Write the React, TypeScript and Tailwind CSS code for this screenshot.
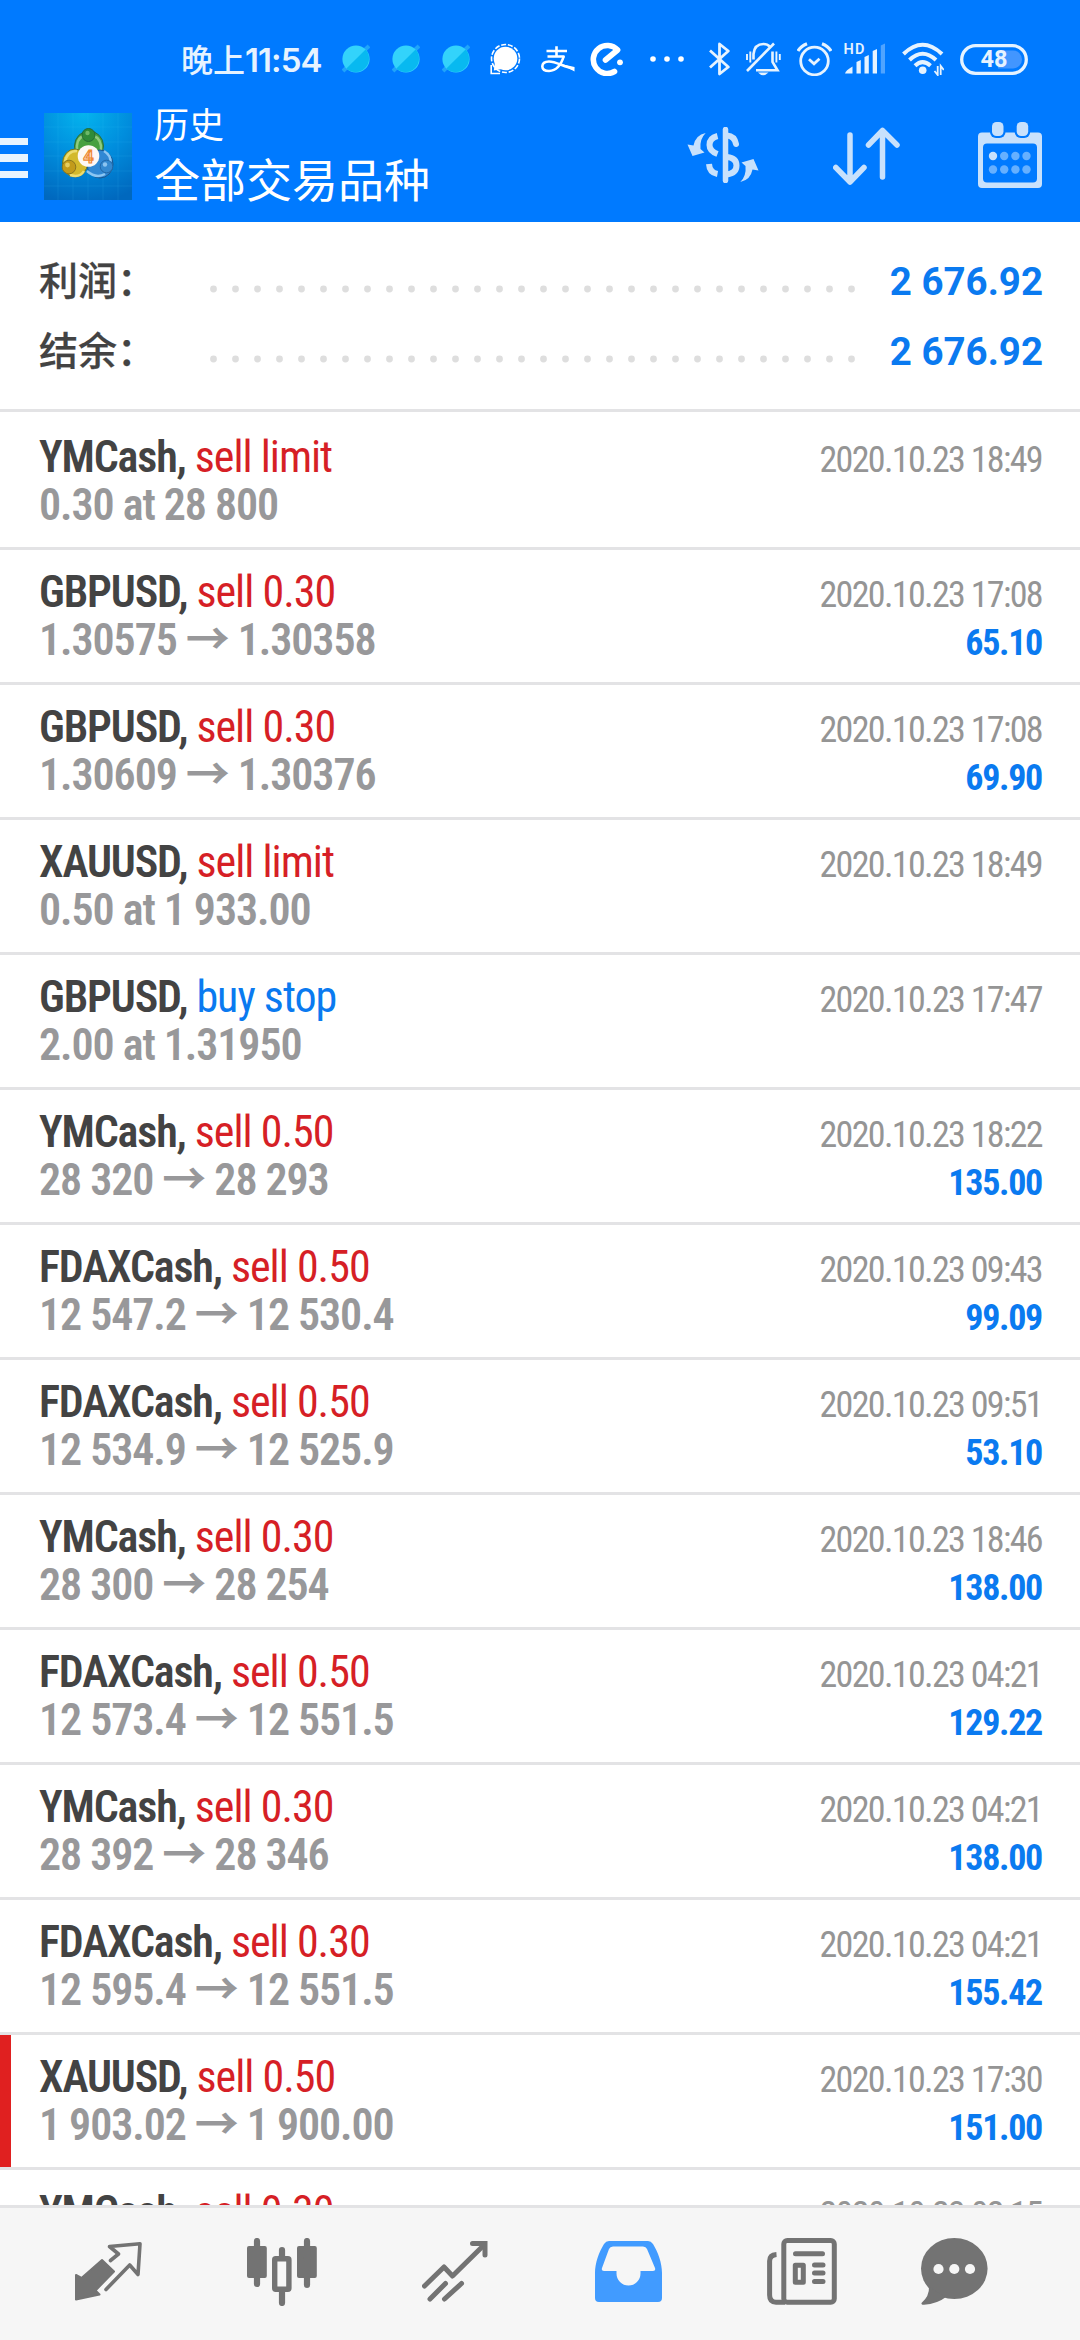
import clsx from 'clsx';

type Deal = {
  symbol: string;
  side: 'sell' | 'buy';
  label: string;
  details: string;
  time: string;
  profit?: string;
  marked?: boolean;
};

const deals: Deal[] = [
  { symbol: 'YMCash', side: 'sell', label: 'sell limit', details: '0.30 at 28 800', time: '2020.10.23 18:49' },
  { symbol: 'GBPUSD', side: 'sell', label: 'sell 0.30', details: '1.30575 → 1.30358', time: '2020.10.23 17:08', profit: '65.10' },
  { symbol: 'GBPUSD', side: 'sell', label: 'sell 0.30', details: '1.30609 → 1.30376', time: '2020.10.23 17:08', profit: '69.90' },
  { symbol: 'XAUUSD', side: 'sell', label: 'sell limit', details: '0.50 at 1 933.00', time: '2020.10.23 18:49' },
  { symbol: 'GBPUSD', side: 'buy', label: 'buy stop', details: '2.00 at 1.31950', time: '2020.10.23 17:47' },
  { symbol: 'YMCash', side: 'sell', label: 'sell 0.50', details: '28 320 → 28 293', time: '2020.10.23 18:22', profit: '135.00' },
  { symbol: 'FDAXCash', side: 'sell', label: 'sell 0.50', details: '12 547.2 → 12 530.4', time: '2020.10.23 09:43', profit: '99.09' },
  { symbol: 'FDAXCash', side: 'sell', label: 'sell 0.50', details: '12 534.9 → 12 525.9', time: '2020.10.23 09:51', profit: '53.10' },
  { symbol: 'YMCash', side: 'sell', label: 'sell 0.30', details: '28 300 → 28 254', time: '2020.10.23 18:46', profit: '138.00' },
  { symbol: 'FDAXCash', side: 'sell', label: 'sell 0.50', details: '12 573.4 → 12 551.5', time: '2020.10.23 04:21', profit: '129.22' },
  { symbol: 'YMCash', side: 'sell', label: 'sell 0.30', details: '28 392 → 28 346', time: '2020.10.23 04:21', profit: '138.00' },
  { symbol: 'FDAXCash', side: 'sell', label: 'sell 0.30', details: '12 595.4 → 12 551.5', time: '2020.10.23 04:21', profit: '155.42' },
  { symbol: 'XAUUSD', side: 'sell', label: 'sell 0.50', details: '1 903.02 → 1 900.00', time: '2020.10.23 17:30', profit: '151.00', marked: true },
  { symbol: 'YMCash', side: 'sell', label: 'sell 0.30', details: '', time: '2020.10.23 02:15' },
];

const summary = [
  { label: '利润：', value: '2 676.92' },
  { label: '结余：', value: '2 676.92' },
];

export default function App() {
  return (
    <div className="flex h-[2340px] w-[1080px] flex-col overflow-hidden bg-white font-[Roboto,'Noto_Sans_CJK_SC',sans-serif]">
      <header className="h-[222px] shrink-0 bg-[#007aff]">
        <StatusBar />
        <TitleBar />
      </header>
      <main className="min-h-0 flex-1 overflow-hidden">
        <section className="h-[190px] border-b-[3px] border-[#e3e3e5] pt-[25px]">
          {summary.map(item => (
            <div key={item.label} className="flex h-[70px] items-center pr-[37px] pl-[39px]">
              <span className="w-[171px] text-[39px] leading-[70px] font-medium text-[#434343] [-webkit-text-stroke:0.25px]">
                {item.label}
              </span>
              <svg width="646" height="8" className="mt-[13px]">
                {Array.from({ length: 30 }, (_, i) => (
                  <circle key={i} cx={3.5 + i * 22} cy="4" r="3.4" fill="#dedede" />
                ))}
              </svg>
              <span className="ml-auto text-[38.5px] leading-[70px] font-bold text-[#0a7af0]">{item.value}</span>
            </div>
          ))}
        </section>
        {deals.map((deal, i) => (
          <DealRow key={i} deal={deal} first={i === 0} />
        ))}
      </main>
      <BottomNav />
    </div>
  );
}

function DealRow({ deal, first }: { deal: Deal; first: boolean }) {
  return (
    <div className={clsx('flex border-b-[3px] border-[#e3e3e5]', first ? 'h-[138px]' : 'h-[135px]')}>
      <div className={clsx('w-[11px] shrink-0', deal.marked && 'bg-[#e02020]')} />
      <div
        className={clsx(
          'flex flex-1 justify-between pr-[38px] pl-[28px] whitespace-nowrap [font-stretch:75%]',
          first ? 'pt-[21px]' : 'pt-[18px]'
        )}
      >
        <div className="text-[44px] leading-[48px]">
          <p>
            <span className="font-semibold tracking-[-1.15px] text-[#434343]">{deal.symbol}, </span>
            <span className={clsx('tracking-[-1px]', deal.side === 'sell' ? 'text-[#d61f26]' : 'text-[#0a7af0]')}>
              {deal.label}
            </span>
          </p>
          <p className="font-semibold tracking-[-1.08px] text-[#98989a]">{deal.details}</p>
        </div>
        <div className="pt-[3px] text-right text-[36px] leading-[48px]">
          <p className="tracking-[-1.65px] text-[#959595]">{deal.time}</p>
          <p className="font-bold tracking-[-1.3px] text-[#0a7af0]">{deal.profit}</p>
        </div>
      </div>
    </div>
  );
}

function Planet() {
  return (
    <svg width="28" height="30" viewBox="0 0 28 30">
      <path d="M1 27 L27 2" stroke="#1fa4fa" strokeWidth="4" />
      <circle cx="14" cy="15" r="13.6" fill="#33d3fb" />
      <path d="M4.4 24.6 A13.6 13.6 0 0 0 23.6 5.4 Z" fill="#08b9f0" />
    </svg>
  );
}

function StatusBar() {
  return (
    <div className="flex h-[90px] items-center pt-[28px] pl-[181px] text-[#e6f3ff]">
      <span className="w-[141px] pt-[2px] text-[32px] leading-[40px] font-medium whitespace-nowrap text-[#e6f3ff]">
        晚上<span className="font-[Inter] text-[33px] font-semibold tracking-[-0.9px]">11:54</span>
      </span>
      <div className="ml-[20px] flex gap-[22px]">
        <Planet />
        <Planet />
        <Planet />
      </div>
      <svg width="31" height="32" viewBox="0 0 31 32" className="ml-[20px]">
        <circle cx="15.5" cy="15.5" r="14" fill="none" stroke="#fff" strokeWidth="1.6" strokeDasharray="5 1.8" />
        <circle cx="15.5" cy="15.5" r="11.8" fill="#fff" />
        <path d="M1.2 22 V30.5 H10" fill="none" stroke="#fff" strokeWidth="1.6" />
        <path d="M5 19 L3.8 27.5 L12 26 Z" fill="#fff" />
      </svg>
      <svg width="34" height="27" viewBox="0 0 34 27" className="ml-[20px]" fill="none" stroke="#fff" strokeWidth="2.6">
        <path d="M5.5 5 H26 M15.5 0.3 V10.5 M6.5 10.5 H23.5" />
        <path d="M22.8 10 Q18.5 24.5 8 25 Q1.3 25 1.3 20.3 Q1.5 15.5 8 15.5 C15 15.5 22 20.5 33 23" />
        <path d="M20 18 L33.5 21 V25.5 Z" fill="#fff" stroke="none" />
      </svg>
      <svg width="34" height="34" viewBox="0 0 34 34" className="ml-[15px]" fill="none" stroke="#fff" strokeWidth="5.6" strokeLinecap="round" strokeLinejoin="round">
        <path d="M24.5 29.5 A14 14 0 1 1 27.6 8 L15.5 18" />
        <circle cx="30" cy="20.3" r="2.9" fill="#fff" stroke="none" />
      </svg>
      <svg width="34" height="6" className="ml-[26px]" fill="#fff">
        <circle cx="3" cy="3" r="2.8" />
        <circle cx="17" cy="3" r="2.8" />
        <circle cx="31" cy="3" r="2.8" />
      </svg>
      <svg width="21" height="34" viewBox="0 0 21 34" className="ml-[25px]" fill="none" stroke="currentColor" strokeWidth="2.8" strokeLinejoin="round">
        <path d="M1 8.5 L19.3 25 L10.5 32 V2 L19.3 9 L1 25.5" />
      </svg>
      <svg width="35" height="34" viewBox="0 0 35 34" className="ml-[16px]" fill="none" stroke="currentColor" strokeWidth="2.6">
        <path d="M7.5 17.5 V12 Q8.5 2 17.5 2 Q21.5 2 23.8 4.5" />
        <path d="M26.5 9.5 V20 L31.5 28.3 H10" />
        <path d="M1 29 L28 1.5" />
        <path d="M12 30.5 H22.5 Q17 36 12 30.5 Z" fill="currentColor" stroke="none" />
        <path d="M1 12 V18 M4.3 9.5 V20.5 M30.4 9.5 V20.5 M33.8 12 V18" strokeWidth="1.9" />
      </svg>
      <svg width="35" height="34" viewBox="0 0 35 34" className="ml-[16px]" fill="none" stroke="currentColor" strokeWidth="2.8">
        <circle cx="17.5" cy="19" r="13.8" />
        <path d="M12 17.3 L17 21.8 L22.5 16.8" />
        <path d="M1 9 Q4 4 10 1.8 M34 9 Q31 4 25 1.8" strokeWidth="3.2" />
      </svg>
      <svg width="42" height="32" viewBox="0 0 42 32" className="ml-[12px] overflow-visible" fill="currentColor">
        <text x="-0.5" y="11" fontSize="14.5" fontWeight="600" letterSpacing="1.3" fontFamily="Roboto">HD</text>
        <path d="M1 30.5 Q1.5 27.5 8.5 23.5 V30.5 Z" />
        <path d="M12.5 19 L16.8 17 V30.5 H12.5 Z M20.5 14 L24.8 12 V30.5 H20.5 Z M28.7 8 L33 6 V30.5 H28.7 Z" />
        <path d="M36.8 2.5 L41 0.5 V30.5 H36.8 Z" opacity="0.35" />
      </svg>
      <svg width="42" height="34" viewBox="0 0 42 34" className="ml-[16px]" fill="none" stroke="currentColor" strokeWidth="4">
        <path d="M1.5 12 Q20.5 -6.5 40 12" />
        <path d="M7.5 18 Q20.5 5.5 34 18" />
        <path d="M13 23.7 Q20.5 16.5 28.5 23.7" />
        <circle cx="20.7" cy="28.3" r="3.8" fill="currentColor" stroke="none" />
        <path d="M35.7 24 V33 L32.5 29 M38.7 33 V24 L41.8 28" strokeWidth="1.8" />
      </svg>
      <svg width="68" height="31" viewBox="0 0 68 31" className="ml-[16px]">
        <rect x="1.7" y="1.7" width="64.6" height="27.6" rx="13.8" fill="none" stroke="currentColor" strokeWidth="3.3" />
        <path d="M38 6.5 H53 a9 9 0 0 1 0 18 H38 Z" fill="#4296ff" />
        <text x="34" y="23.3" textAnchor="middle" fontSize="23.5" fontWeight="700" fontFamily="Roboto" fill="currentColor">48</text>
      </svg>
    </div>
  );
}

function Logo() {
  return (
    <svg width="88" height="87" viewBox="0 0 88 87" className="ml-[16px]">
      <defs>
        <radialGradient id="logo-bg" cx="0.45" cy="0" r="1.05">
          <stop offset="0" stopColor="#04b4ee" />
          <stop offset="0.5" stopColor="#008ddd" />
          <stop offset="1" stopColor="#0068be" />
        </radialGradient>
      </defs>
      <rect width="88" height="87" fill="url(#logo-bg)" />
      <path d="M14 0V87M29 0V87M44 0V87M59 0V87M74 0V87M0 14H88M0 29H88M0 43H88M0 58H88M0 73H88" stroke="#4cc3f5" strokeOpacity="0.12" />
      <ellipse cx="45" cy="33" rx="14.5" ry="15" fill="#47a040" stroke="#2a6b3c" />
      <path d="M33 38 Q32 25 40 23 M57 38 Q58 26 50 23" stroke="#8fcb7e" strokeWidth="2.5" fill="none" />
      <ellipse cx="31" cy="50" rx="12.5" ry="14" fill="#d3b92c" stroke="#67752a" />
      <path d="M21 49 Q23 38 33 38 M26 62 Q36 65 40 58" stroke="#ecdc70" strokeWidth="2.5" fill="none" />
      <ellipse cx="56" cy="51" rx="13" ry="14" fill="#3088d4" stroke="#1a568f" />
      <path d="M60 38 Q68 43 66 50 M43 58 Q52 66 61 61" stroke="#8cc6f2" strokeWidth="2.5" fill="none" />
      <circle cx="44.5" cy="22" r="6.5" fill="#2f8b38" stroke="#256a34" />
      <circle cx="43.5" cy="20" r="2.2" fill="#6db868" />
      <circle cx="25" cy="54" r="6.8" fill="#c29b1b" stroke="#8a761f" />
      <circle cx="23.5" cy="52" r="2.4" fill="#e6ce60" />
      <circle cx="62.5" cy="53.5" r="6.3" fill="#3489d0" stroke="#2268a8" />
      <circle cx="61" cy="51.5" r="2.2" fill="#8cc4f0" />
      <circle cx="44.5" cy="43" r="10.8" fill="#fdf8f4" />
      <text x="44.5" y="49.5" textAnchor="middle" fontSize="18" fontWeight="700" fontFamily="Roboto" fill="#fbe3cf" stroke="#ee8a35" strokeWidth="1.2">4</text>
    </svg>
  );
}

function TitleBar() {
  return (
    <div className="flex h-[132px] items-center pr-[38px] text-[#c8e1fc]">
      <div className="mt-[4px] flex w-[28px] flex-col gap-[9px]">
        <div className="h-[7.5px] bg-[#e8f4ff]" />
        <div className="h-[7.5px] bg-[#e8f4ff]" />
        <div className="h-[7.5px] bg-[#e8f4ff]" />
      </div>
      <Logo />
      <div className="ml-[22px] pt-[4px] text-white">
        <p className="text-[35px] leading-[40px]">历史</p>
        <p className="mt-[6px] text-[46px] leading-[56px]">全部交易品种</p>
      </div>
      <svg width="72" height="56" viewBox="0 0 72 56" className="mr-[74px] mb-[2px] ml-auto" fill="none" stroke="currentColor" strokeWidth="6">
        <path d="M38.5 2.5 V53.5" strokeWidth="5.5" strokeLinecap="round" />
        <path d="M30.5 9 Q22.5 11 22.5 18 Q22.5 24 30.5 27" />
        <path d="M22 37 Q22.5 45.5 30.5 47" />
        <path d="M40 8.5 Q47.5 9 49 17" strokeLinecap="round" />
        <path d="M40 30 Q49.5 31 49.5 38.5 Q49.5 46 40 47.5" />
        <path d="M18.7 6 Q8.5 8 6.5 18.5 L0.5 17.5 L5.5 29 L17.5 25.5 L13.5 22 Q12.5 12 18.7 6 Z" fill="currentColor" stroke="none" />
        <path d="M18.7 6 Q8.5 8 6.5 18.5 L0.5 17.5 L5.5 29 L17.5 25.5 L13.5 22 Q12.5 12 18.7 6 Z" fill="currentColor" stroke="none" transform="rotate(180 36 30.5)" />
      </svg>
      <svg width="67" height="59" viewBox="0 0 67 59" className="mr-[78px]" fill="none" stroke="currentColor" strokeWidth="5.5" strokeLinecap="round" strokeLinejoin="round">
        <path d="M17 8 V55 M2.8 40.5 L17 55 L31 40.5" />
        <path d="M49.5 50 V3.5 M35.5 18 L49.5 3.5 L64 18" />
      </svg>
      <svg width="64" height="66" viewBox="0 0 64 66" className="mb-[3px]">
        <path fillRule="evenodd" d="M4 10.5 H60 q4 0 4 4 V62 q0 4-4 4 H4 q-4 0-4-4 V14.5 q0-4 4-4 z M9 21.5 q-4 0-4 4 V56.5 q0 4 4 4 H55 q4 0 4-4 V25.5 q0-4-4-4 z" fill="currentColor" />
        <rect x="12" y="-2" width="15.5" height="18" rx="6" fill="#007aff" />
        <rect x="36.7" y="-2" width="15.5" height="18" rx="6" fill="#007aff" />
        <rect x="14" y="0" width="11.5" height="14" rx="4.5" fill="currentColor" />
        <rect x="38.7" y="0" width="11.5" height="14" rx="4.5" fill="currentColor" />
        {[34, 47.5].map(cy =>
          [15, 26.2, 37.4, 48.5].map(cx => (
            <circle key={`${cx}-${cy}`} cx={cx} cy={cy} r="4.2" fill={cx === 15 && cy === 34 ? '#c8e1fc' : '#66b0ff'} />
          ))
        )}
      </svg>
    </div>
  );
}

function BottomNav() {
  return (
    <nav className="flex h-[135px] shrink-0 items-center gap-[105px] border-t-[3px] border-[#e3e3e5] bg-[#f6f6f6] pb-[5px] pl-[75px] text-[#737373]">
      <svg width="67" height="59" viewBox="0 0 67 59" fill="none" stroke="currentColor" strokeLinejoin="round" strokeLinecap="round">
        <path d="M1 33 L6.5 36 L27 18 L39 29.5 L20.5 48.5 L24.5 52.5 L1 57.5 Z" fill="currentColor" strokeWidth="2" />
        <path d="M31 47.5 L54.7 23 L63 32.5 L65 1.8 L34.5 4.5 L43.5 12 L35.5 18.5" strokeWidth="3.6" />
      </svg>
      <svg width="70" height="68" viewBox="0 0 70 68" fill="currentColor">
        <rect x="0" y="8" width="19.8" height="32" rx="2" />
        <rect x="50" y="8" width="19.8" height="32" rx="2" />
        <path d="M10 3 V46 M60 3 V47 M35 12 V18 M35 54 V65" stroke="currentColor" strokeWidth="6.2" strokeLinecap="round" />
        <rect x="27.7" y="20.7" width="14.2" height="30.6" rx="1" fill="none" stroke="currentColor" strokeWidth="5.4" />
      </svg>
      <svg width="66" height="61" viewBox="0 0 66 61" fill="none" stroke="currentColor" strokeWidth="5" strokeLinecap="round">
        <path d="M2.5 45 L22 26 L30.5 35 L62 4" strokeLinejoin="round" />
        <path d="M50.5 2.6 H63 V14" />
        <path d="M8 58 L23.5 42.5 M22.5 58 L39.5 42.5" />
      </svg>
      <svg width="67" height="61" viewBox="0 0 67 61" className="ml-[2px]">
        <path
          fill="#419bff"
          fillRule="evenodd"
          d="M14 0 H53 q3 0 5 3 C63 11 67 22 67 32 V57 q0 4-4 4 H4 q-4 0-4-4 V32 C0 22 4 11 9 3 q2-3 5-3 z M18 5.5 H48 q3 0 4 2.5 L60 27 q1 3-2 3 H45.5 v2.5 a12 12 0 0 1-24 0 V30 H9 q-3 0-2-3 L14 8 q1-2.5 4-2.5 z"
        />
      </svg>
      <svg width="70" height="67" viewBox="0 0 70 67" fill="none" stroke="currentColor" strokeWidth="5" strokeLinecap="round">
        <rect x="16.8" y="2.6" width="50.5" height="61.6" rx="3.5" />
        <path d="M9.5 16.5 Q2.6 17 2.6 23 V57 Q2.6 64.2 9 64.2 H18" strokeLinecap="butt" />
        <path d="M28.5 15.7 H55.5 M47.5 27 H56 M47.5 35 H56 M47.5 43.5 H56" />
        <rect x="28.3" y="27.2" width="8" height="17" strokeWidth="5" strokeLinejoin="round" />
      </svg>
      <svg width="67" height="67" viewBox="0 0 67 67" className="-ml-[21px]" fill="currentColor">
        <ellipse cx="33.3" cy="30.5" rx="33.3" ry="30.5" />
        <path d="M8 49 Q8.5 58 0.5 65 Q0 67 3 66.8 Q16 66 25 59 Z" />
        <g fill="#f6f6f6">
          <circle cx="17.5" cy="31" r="5.1" />
          <circle cx="33.3" cy="31" r="5.1" />
          <circle cx="49" cy="31" r="5.1" />
        </g>
      </svg>
    </nav>
  );
}
